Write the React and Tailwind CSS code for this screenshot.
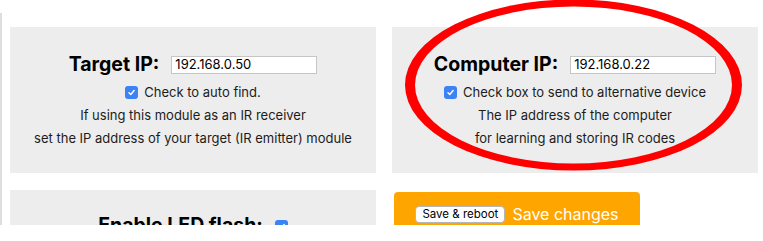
const Check = () => (
  <span className="inline-flex w-[13px] h-[13px] rounded-[3px] bg-[#3b82f6] items-center justify-center shrink-0">
    <svg width="9" height="9" viewBox="0 0 10 10">
      <path d="M2.2 5.3 L4.2 7.3 L7.9 2.8" fill="none" stroke="white" strokeWidth="1.6" strokeLinecap="round" strokeLinejoin="round" />
    </svg>
  </span>
);

const IpPanel = ({ label, ip, check, lines }) => (
  <div className="bg-[#ededed] h-[146px] pt-[26px] flex flex-col items-center">
    <div className="flex items-center gap-[12px] h-[24px]">
      <span className="text-[19.5px] font-bold text-black leading-none">{label}</span>
      <input
        readOnly
        value={ip}
        className="w-[146px] h-[18px] bg-white border border-[#c6c6c6] text-[13px] pl-[3px] text-black outline-none"
      />
    </div>
    <div className="mt-[4px] flex items-center gap-[6px] h-[23px]">
      <Check />
      <span>{check}</span>
    </div>
    {lines.map((l) => (
      <div key={l} className="h-[23px] flex items-center">
        {l}
      </div>
    ))}
  </div>
);

const App = () => {
  return (
    <div
      className="relative w-[763px] h-[241px] bg-white overflow-hidden text-[13px] text-[#1c1c1c]"
      style={{ fontFamily: "Inter, 'Noto Sans', sans-serif" }}
    >
      <div className="mt-[13px] h-[212px] border-l-2 border-[#dedede] pt-[14px] pl-[8px] overflow-hidden">
        <div className="grid grid-cols-[366px_366px] gap-x-[16px]">
          <IpPanel
            label="Target IP:"
            ip="192.168.0.50"
            check="Check to auto find."
            lines={[
              "If using this module as an IR receiver",
              "set the IP address of your target (IR emitter) module",
            ]}
          />
          <IpPanel
            label="Computer IP:"
            ip="192.168.0.22"
            check="Check box to send to alternative device"
            lines={["The IP address of the computer", "for learning and storing IR codes"]}
          />
        </div>
        <div className="flex mt-[17px] gap-[18px] items-start">
          <div className="w-[366px] h-[80px] bg-[#ededed] pt-[24px] flex justify-center">
            <div className="flex items-center gap-[12px] h-[24px]">
              <span className="text-[19.5px] font-bold text-black leading-none">Enable LED flash:</span>
              <Check />
            </div>
          </div>
          <div className="mt-[2px] w-[246px] h-[80px] bg-[#ffa500] rounded-t-[4px] pt-[14px] flex justify-center items-start gap-[7px]">
            <button className="h-[17px] px-[6px] bg-white border border-[#b5b5b5] rounded-[4px] text-[11.5px] leading-none text-black">
              Save &amp; reboot
            </button>
            <span className="text-[16px] leading-[17px] text-white">Save changes</span>
          </div>
        </div>
      </div>
      <svg className="absolute left-0 top-0 pointer-events-none" width="763" height="241" viewBox="0 0 763 241">
        <path
          fillRule="evenodd"
          fill="#ff0000"
          d="M405 85 A168.5 85.5 0 1 0 742 85 A168.5 85.5 0 1 0 405 85 Z M415 85 A158.5 78.5 0 1 0 732 85 A158.5 78.5 0 1 0 415 85 Z"
        />
      </svg>
    </div>
  );
};

export default App;
